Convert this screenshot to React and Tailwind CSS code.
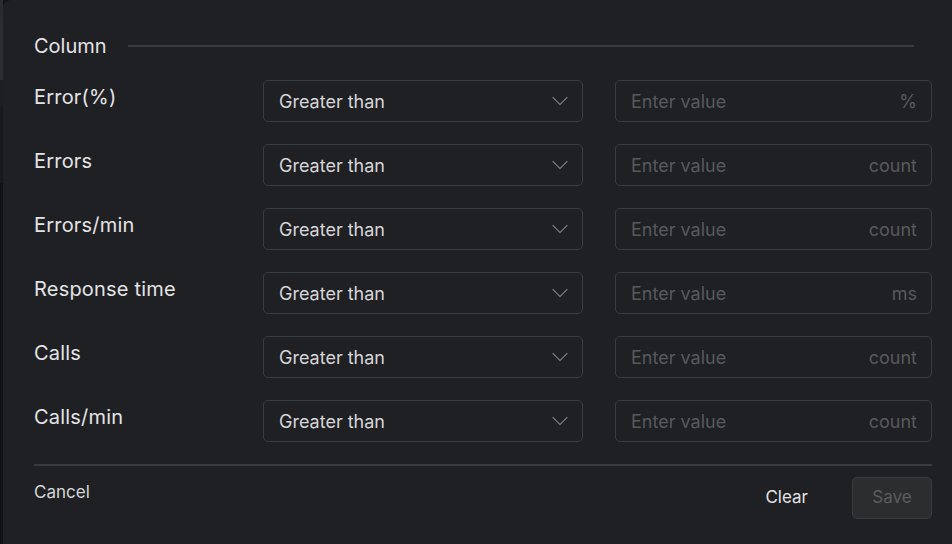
import { ChevronDown } from "lucide-react";

const rows = [
  { label: "Error(%)", unit: "%" },
  { label: "Errors", unit: "count" },
  { label: "Errors/min", unit: "count" },
  { label: "Response time", unit: "ms" },
  { label: "Calls", unit: "count" },
  { label: "Calls/min", unit: "count" },
];

const FilterRow = ({ label, unit }) => (
  <div className="flex items-start h-[42px]">
    <div className="w-[229px] pt-[4px] text-[20px] leading-[26px] tracking-[0.2px] text-[#e4e4e6]">{label}</div>
    <div className="w-[320px] h-[42px] flex items-center justify-between pl-[15px] pr-[8px] border border-[#3b3c3f] rounded-[5px]">
      <span className="text-[18px] text-[#d6d6d8]">Greater than</span>
      <ChevronDown className="w-[28px] h-[28px] text-[#727377]" strokeWidth={1.1} />
    </div>
    <div className="ml-[32px] flex-1 h-[42px] flex items-center justify-between pl-[15px] pr-[14px] border border-[#3b3c3f] rounded-[5px]">
      <span className="text-[18px] text-[#58595d]">Enter value</span>
      <span className="text-[18px] text-[#58595d]">{unit}</span>
    </div>
  </div>
);

export default function App() {
  return (
    <div className="w-[952px] h-[544px] flex bg-[#121414] overflow-hidden" style={{ fontFamily: "Inter, 'Noto Sans', sans-serif" }}>
      <div className="w-[3px] flex flex-col">
        <div className="h-[17px] bg-[#2a2b2e]" />
        <div className="h-[63px] bg-[#2c2d31]" />
        <div className="h-[27px] bg-[#1d1e21]" />
        <div className="h-[76px] bg-[#18191c]" />
        <div className="flex-1 bg-[#101313]" />
      </div>
      <div className="flex-1 bg-[#1f2023] rounded-tl-[8px] pl-[31px] pr-[20px] pt-[33px] flex flex-col">
        <div className="flex items-center h-[26px]">
          <span className="text-[20px] text-[#e4e4e6]">Column</span>
          <div className="ml-[21px] mr-[18px] flex-1 h-[2px] bg-[#393a3d]" />
        </div>
        <div className="mt-[21px] flex flex-col gap-[22px]">
          {rows.map((r) => (
            <FilterRow key={r.label} {...r} />
          ))}
        </div>
        <div className="mt-[22px] h-[2px] bg-[#393a3d]" />
        <div className="mt-[11px] flex items-start justify-between">
          <button className="mt-[3px] text-[17px] text-[#d6d6d8]">Cancel</button>
          <div className="flex items-center">
            <button className="text-[17px] text-[#e4e4e6]">Clear</button>
            <button className="ml-[44px] w-[80px] h-[42px] rounded-[5px] bg-[#2c2d2f] border border-[#3a3b3e] text-[17px] text-[#5b5c60]">Save</button>
          </div>
        </div>
      </div>
    </div>
  );
}
